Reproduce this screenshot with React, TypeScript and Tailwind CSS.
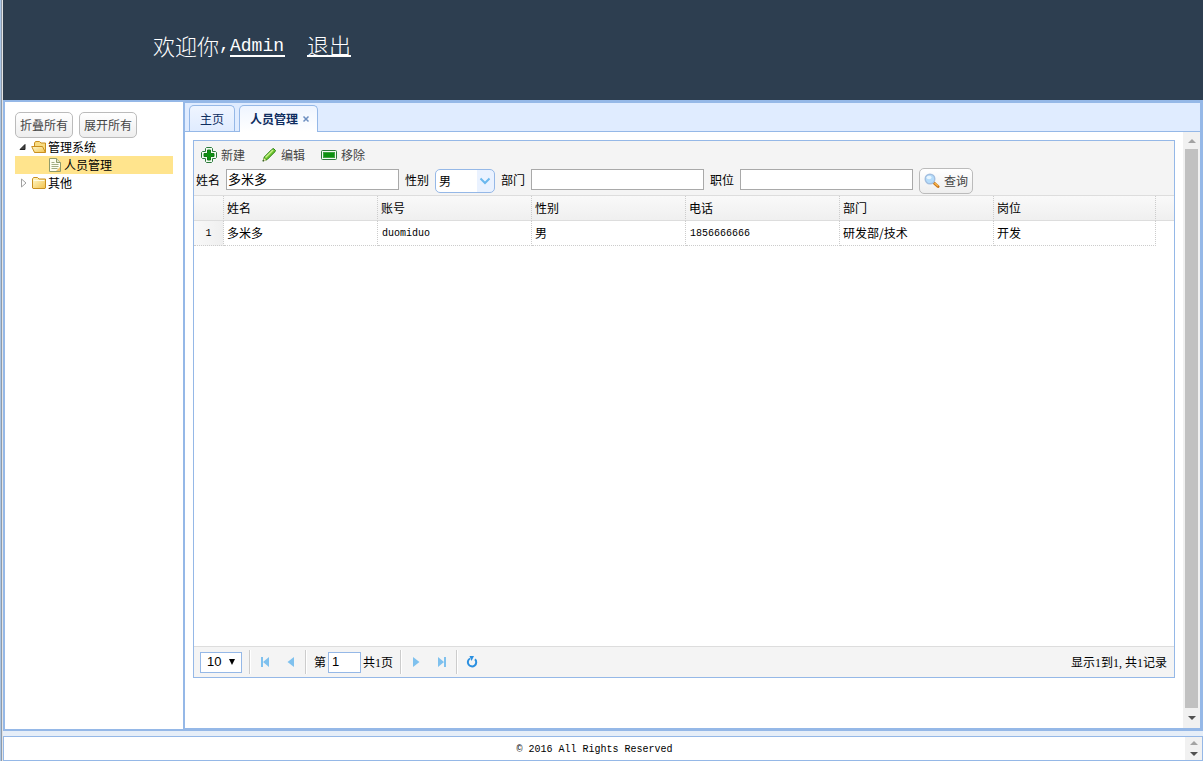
import React from "react";

function FolderIcon({ open = false }: { open?: boolean }) {
  return (
    <svg width="16" height="16" viewBox="0 0 16 16" aria-hidden="true">
      <defs>
        <linearGradient id="folderFill" x1="0" y1="0" x2="1" y2="1">
          <stop offset="0" stopColor="#fffbd0" />
          <stop offset="1" stopColor="#f2c14a" />
        </linearGradient>
      </defs>
      {open ? (
        <>
          <path d="M3.500 13V4l1-1.500h4L10 4h4.500v9z" fill="#f8dc82" stroke="#c98f1f" strokeLinejoin="round" />
          <path d="M3.500 13.500L.7 7.500h10.800l3 6z" fill="url(#folderFill)" stroke="#c98f1f" strokeLinejoin="round" />
        </>
      ) : (
        <>
          <path d="M1.500 13V4l1-1.500h4L8 4h6.500v9l-.5.500H2z" fill="url(#folderFill)" stroke="#c98f1f" strokeLinejoin="round" />
          <path d="M2.500 5.500h11" stroke="#fffbe0" />
        </>
      )}
    </svg>
  );
}

function FileIcon() {
  return (
    <svg width="16" height="16" viewBox="0 0 16 16" aria-hidden="true">
      <path d="M2.500 1.500h7l4 4v9h-11z" fill="#fdfdf0" stroke="#8f9a6a" />
      <path d="M9.500 1.500v4h4" fill="#e0e4c8" stroke="#8f9a6a" />
      <path d="M4.500 5.500h3M4.500 7.500h7M4.500 9.500h7M4.500 11.500h6" stroke="#a3ad84" />
      <path d="M9 14l4-4v4z" fill="#f2c66a" />
    </svg>
  );
}

function AddIcon() {
  return (
    <svg width="16" height="16" viewBox="0 0 16 16" aria-hidden="true">
      <path d="M5.500 .5h5l1 1v3h3l1 1v5l-1 1h-3v3l-1 1h-5l-1-1v-3h-3l-1-1v-5l1-1h3v-3z" fill="#f2fbf2" stroke="#2b7a3a" />
      <path d="M6.500 3h3v3.500H13v3H9.500V13h-3V9.500H3v-3h3.500z" fill="#0c9210" stroke="#117a14" />
    </svg>
  );
}

function PencilIcon() {
  return (
    <svg width="16" height="16" viewBox="0 0 16 16" aria-hidden="true">
      <path d="M2 14l1.300-4L11 2.300l1.500-.8 2 2-.8 1.500L6 12.700z" fill="#6cc52c" stroke="#2b7f17" strokeLinejoin="round" />
      <path d="M4.500 10.500l7.500-7.500" stroke="#c8f08a" strokeWidth="1.500" />
      <path d="M2.800 11l2.500 2.300-2 .7-1-1z" fill="#f4e6b4" />
      <path d="M1.500 14.500l.6-2 1.500 1.500z" fill="#3c5a2a" />
    </svg>
  );
}

function RemoveIcon() {
  return (
    <svg width="16" height="16" viewBox="0 0 16 16" aria-hidden="true">
      <rect x=".5" y="3.500" width="15" height="9" rx="1" fill="#f2fbf2" stroke="#2b7a3a" />
      <rect x="2.500" y="5.500" width="11" height="5" fill="#0c9210" stroke="#3da441" />
    </svg>
  );
}

function SearchIcon() {
  return (
    <svg width="16" height="16" viewBox="0 0 16 16" aria-hidden="true">
      <path d="M9.500 9.500l4.500 4" stroke="#c9761b" strokeWidth="3" strokeLinecap="round" />
      <path d="M10.500 10l3.500 3" stroke="#f7b64a" strokeWidth="1.500" />
      <circle cx="6" cy="6" r="4.800" fill="#b5dcfb" stroke="#a3bfe0" strokeWidth="1.400" />
      <ellipse cx="5" cy="4.500" rx="2.500" ry="1.800" fill="#e8f6ff" />
    </svg>
  );
}

type PagerKind = "first" | "prev" | "next" | "last";

function PagerIcon({ kind }: { kind: PagerKind }) {
  const paths: Record<PagerKind, string> = {
    first: "M4 3h2v10H4zM12 3v10L6 8z",
    prev: "M11 3v10L4.500 8z",
    next: "M5 3v10l6.500-5z",
    last: "M10 3h2v10h-2zM4 3v10l6-5z",
  };
  return (
    <svg width="16" height="16" viewBox="0 0 16 16" aria-hidden="true">
      <path d={paths[kind]} fill="#7fc1ee" />
    </svg>
  );
}

function Triangle({ up = false, className }: { up?: boolean; className: string }) {
  return (
    <svg width="8" height="4" viewBox="0 0 8 4" className={className} aria-hidden="true">
      <path d={up ? "M4 0l4 4H0z" : "M0 0h8L4 4z"} fill="currentColor" />
    </svg>
  );
}

function ToolButton({ icon, children }: { icon: React.ReactNode; children: React.ReactNode }) {
  return (
    <button type="button" className="flex h-[26px] items-center gap-1 text-[#444]">
      {icon}
      {children}
    </button>
  );
}

function PagerButton({ kind, label }: { kind: PagerKind; label: string }) {
  return (
    <button type="button" aria-label={label} className="flex h-6 w-[26px] items-center justify-center">
      <PagerIcon kind={kind} />
    </button>
  );
}

function Separator() {
  return <span className="h-6 w-[2px] border-l border-[#ccc] bg-white" />;
}

function FilterField({ id, label, value }: { id: string; label: string; value?: string }) {
  return (
    <div className="flex gap-[6px]">
      <label htmlFor={id} className="leading-6">{label}</label>
      <input
        id={id}
        type="text"
        defaultValue={value}
        className="mt-px h-[21px] w-[173px] border border-[#a9a9a9] bg-white px-px pb-[2px] text-[13px] outline-none"
      />
    </div>
  );
}

const outlined =
  "flex h-[26px] items-center rounded-[5px] border border-[#bbb] bg-linear-to-b from-white to-[#eee] text-[#444]";

const columns = ["姓名", "账号", "性别", "电话", "部门", "岗位"];
const rows = [["多米多", "duomiduo", "男", "1856666666", "研发部/技术", "开发"]];

function isLatin(text: string) {
  return /^[\x20-\x7e]+$/.test(text);
}

function Grid() {
  return (
    <table className="w-full table-fixed border-separate border-spacing-0 text-left">
      <colgroup>
        <col className="w-[30px]" />
        <col className="w-[154px]" />
        <col className="w-[154px]" />
        <col className="w-[154px]" />
        <col className="w-[154px]" />
        <col className="w-[154px]" />
        <col />
        <col className="w-[18px]" />
      </colgroup>
      <thead>
        <tr className="h-[25px] bg-linear-to-b from-[#f9f9f9] to-[#efefef]">
          <td className="border-r border-b border-r-[#ccc] border-b-[#ddd] [border-right-style:dotted]" />
          {columns.map((name) => (
            <th key={name} scope="col" className="border-r border-b border-r-[#ccc] border-b-[#ddd] px-[3px] font-normal [border-right-style:dotted]">
              {name}
            </th>
          ))}
          <td className="border-b border-[#ddd]" />
        </tr>
      </thead>
      <tbody>
        {rows.map((row, index) => (
          <tr key={row[1]} className="h-[25px]">
            <td className="border-r border-b border-dotted border-[#ccc] bg-linear-to-r from-[#f9f9f9] to-[#efefef] pt-[2px] text-center font-['Liberation_Mono',monospace] text-[10px]">
              {index + 1}
            </td>
            {row.map((cell, i) => (
              <td
                key={columns[i]}
                className={
                  isLatin(cell)
                    ? "border-r border-b border-dotted border-[#ccc] px-1 pt-[2px] font-['Liberation_Mono',monospace] text-[10px]"
                    : "border-r border-b border-dotted border-[#ccc] px-[3px]"
                }
              >
                {cell}
              </td>
            ))}
            <td />
          </tr>
        ))}
      </tbody>
    </table>
  );
}

function Pager() {
  return (
    <div className="flex h-[31px] items-center border-t border-[#ddd] bg-[#f4f4f4] pr-[7px] pl-[6px] font-['Liberation_Serif','Noto_Sans_CJK_SC',serif]">
      <div className="relative mr-[7px] font-['Liberation_Sans',sans-serif]">
        <select aria-label="每页条数" className="block h-[21px] w-[42px] appearance-none border border-[#95b8e7] bg-white pl-[6px] text-[13px] outline-none">
          <option>10</option>
          <option>20</option>
          <option>50</option>
        </select>
        <svg width="6" height="6" viewBox="0 0 6 6" className="pointer-events-none absolute top-[7px] right-[7px]" aria-hidden="true">
          <path d="M0 0h6L3 6z" fill="#000" />
        </svg>
      </div>
      <Separator />
      <div className="flex px-px">
        <PagerButton kind="first" label="第一页" />
        <PagerButton kind="prev" label="上一页" />
      </div>
      <Separator />
      <label htmlFor="page" className="mr-[2px] ml-[7px] pt-px">第</label>
      <input id="page" type="text" defaultValue="1" className="h-[21px] w-[33px] border border-[#95b8e7] bg-white px-[3px] pb-px font-['Liberation_Sans',sans-serif] text-[13px] outline-none" />
      <span className="mr-[7px] ml-[2px] pt-px">共1页</span>
      <Separator />
      <div className="flex px-px">
        <PagerButton kind="next" label="下一页" />
        <PagerButton kind="last" label="最后一页" />
      </div>
      <Separator />
      <button type="button" aria-label="刷新" className="flex h-6 w-7 items-center justify-center">
        <svg width="16" height="16" viewBox="0 0 16 16" fill="none" aria-hidden="true">
          <path d="M11 5.200A4.200 4.200 0 1 1 6 4.500" stroke="#2a8fe0" strokeWidth="2" />
          <path d="M5.500 2h4.500L7.500 7z" fill="#2a8fe0" />
        </svg>
      </button>
      <span className="ml-auto pt-px">显示1到1, 共1记录</span>
    </div>
  );
}

function Sidebar() {
  return (
    <aside className="w-[182px] shrink-0 border-2 border-[#95b8e7] bg-white p-[10px]">
      <div className="flex gap-[6px]">
        <button type="button" className={outlined + " px-1"}>折叠所有</button>
        <button type="button" className={outlined + " px-1"}>展开所有</button>
      </div>
      <ul>
        <li>
          <div className="flex h-[18px] items-center">
            <svg width="16" height="16" viewBox="0 0 16 16" aria-hidden="true">
              <path d="M10 5.500v5H5z" fill="#444" stroke="#222" />
            </svg>
            <FolderIcon open />
            <span className="ml-px">管理系统</span>
          </div>
          <ul>
            <li className="flex h-[18px] items-center bg-[#ffe48d] pl-8">
              <FileIcon />
              <span className="ml-px">人员管理</span>
            </li>
          </ul>
        </li>
        <li className="flex h-[18px] items-center">
          <svg width="16" height="16" viewBox="0 0 16 16" aria-hidden="true">
            <path d="M6.500 4v8l4.500-4z" fill="#fff" stroke="#a0a0a0" />
          </svg>
          <FolderIcon />
          <span className="ml-px">其他</span>
        </li>
      </ul>
    </aside>
  );
}

export default function App() {
  return (
    <div className="flex h-screen bg-[#e6eef8] font-['Noto_Sans_CJK_SC',sans-serif] text-[12px] leading-4 text-black">
      <div className="flex w-[3px] shrink-0">
        <span className="w-px bg-[#a9c5e6]" />
        <span className="w-px bg-[#8e9aa8]" />
        <span className="w-px bg-[#e4e4e4]" />
      </div>
      <div className="flex min-w-0 flex-1 flex-col">
        <header className="flex h-[100px] shrink-0 items-end bg-[#2d3e50] pb-[43px] pl-[150px] text-[22px] leading-5 font-light text-white">
          <span className="border-b-2 border-transparent">欢迎你</span>
          <span className="w-[11px] border-b-2 border-transparent font-['Liberation_Mono',monospace] text-[18px] font-normal">,</span>
          <a href="#admin" className="w-[55px] border-b-2 border-white font-['Liberation_Mono',monospace] text-[18px] leading-[18px] font-normal">Admin</a>
          <a href="#logout" className="ml-[22px] border-b-2 border-white leading-[22px]">退出</a>
        </header>

        <div className="flex min-h-0 flex-1">
          <Sidebar />
          <main className="flex min-w-0 flex-1 flex-col border-y-3 border-r-3 border-[#95b8e7] bg-white">
            <nav className="flex h-[29px] shrink-0 items-end gap-1 border-b border-[#95b8e7] bg-[#e0ecff] pl-1">
              <button type="button" className="h-[26px] rounded-t-[5px] border border-b-0 border-[#95b8e7] bg-linear-to-b from-[#eff5ff] to-[#e0ecff] px-[10px] text-[#0e2d5f]">
                主页
              </button>
              <div className="-mb-px flex h-[27px] items-center gap-1 rounded-t-[5px] border border-b-0 border-[#95b8e7] bg-linear-to-b from-[#eff5ff] to-white pr-[7px] pl-[10px] text-[#0e2d5f]">
                <button type="button" className="font-bold">人员管理</button>
                <button type="button" aria-label="关闭" className="flex">
                  <svg width="8" height="8" viewBox="0 0 8 8" aria-hidden="true">
                    <path d="M1.500 1.500l5 5M6.500 1.500l-5 5" stroke="#6d8fc0" strokeWidth="1.500" />
                  </svg>
                </button>
              </div>
            </nav>

            <div className="flex min-h-0 flex-1">
              <section className="mx-2 mt-2 mb-[50px] flex min-w-0 flex-1 flex-col border border-[#95b8e7]">
                <div className="border-b border-[#ddd] bg-[#f4f4f4] pt-px">
                  <div className="flex gap-4 pl-[7px]">
                    <ToolButton icon={<AddIcon />}>新建</ToolButton>
                    <ToolButton icon={<PencilIcon />}>编辑</ToolButton>
                    <ToolButton icon={<RemoveIcon />}>移除</ToolButton>
                  </div>
                  <form className="flex h-[27px] gap-[6px] pl-[2px]">
                    <FilterField id="name" label="姓名" value="多米多" />
                    <div className="flex gap-[6px]">
                      <label htmlFor="gender" className="leading-6">性别</label>
                      <div className="relative mt-px">
                        <select id="gender" className="block h-6 w-[60px] appearance-none rounded-[5px] border border-[#95b8e7] bg-linear-to-r from-white from-[41px] to-[#eaf2ff] to-[41px] pl-[3px] outline-none">
                          <option>男</option>
                          <option>女</option>
                        </select>
                        <svg width="12" height="8" viewBox="0 0 12 8" className="pointer-events-none absolute top-2 right-1" aria-hidden="true">
                          <path d="M1.500 1.500L6 6l4.500-4.500" stroke="#6bb8ee" strokeWidth="2" fill="none" />
                        </svg>
                      </div>
                    </div>
                    <FilterField id="department" label="部门" />
                    <FilterField id="position" label="职位" />
                    <button type="button" className={outlined + " gap-1 px-1"}>
                      <SearchIcon />
                      查询
                    </button>
                  </form>
                </div>
                <div className="min-h-0 flex-1">
                  <Grid />
                </div>
                <Pager />
              </section>
              <div className="flex w-[17px] shrink-0 flex-col items-center bg-[#f1f1f1]" aria-hidden="true">
                <div className="flex h-[17px] items-center">
                  <Triangle up className="text-[#a3a3a3]" />
                </div>
                <div className="w-[13px] flex-1 bg-[#c1c1c1]" />
                <div className="flex h-5 items-center">
                  <Triangle className="text-[#505050]" />
                </div>
              </div>
            </div>
          </main>
        </div>

        <footer className="mt-[5px] flex h-[25px] shrink-0 border border-[#95b8e7] bg-white">
          <p className="flex-1 pt-px text-center font-['Liberation_Mono',monospace] text-[10px] leading-6">© 2016 All Rights Reserved</p>
          <div className="flex w-[17px] flex-col items-center justify-around bg-[#f1f1f1]" aria-hidden="true">
            <Triangle up className="text-[#a3a3a3]" />
            <Triangle className="text-[#505050]" />
          </div>
        </footer>
      </div>
    </div>
  );
}
